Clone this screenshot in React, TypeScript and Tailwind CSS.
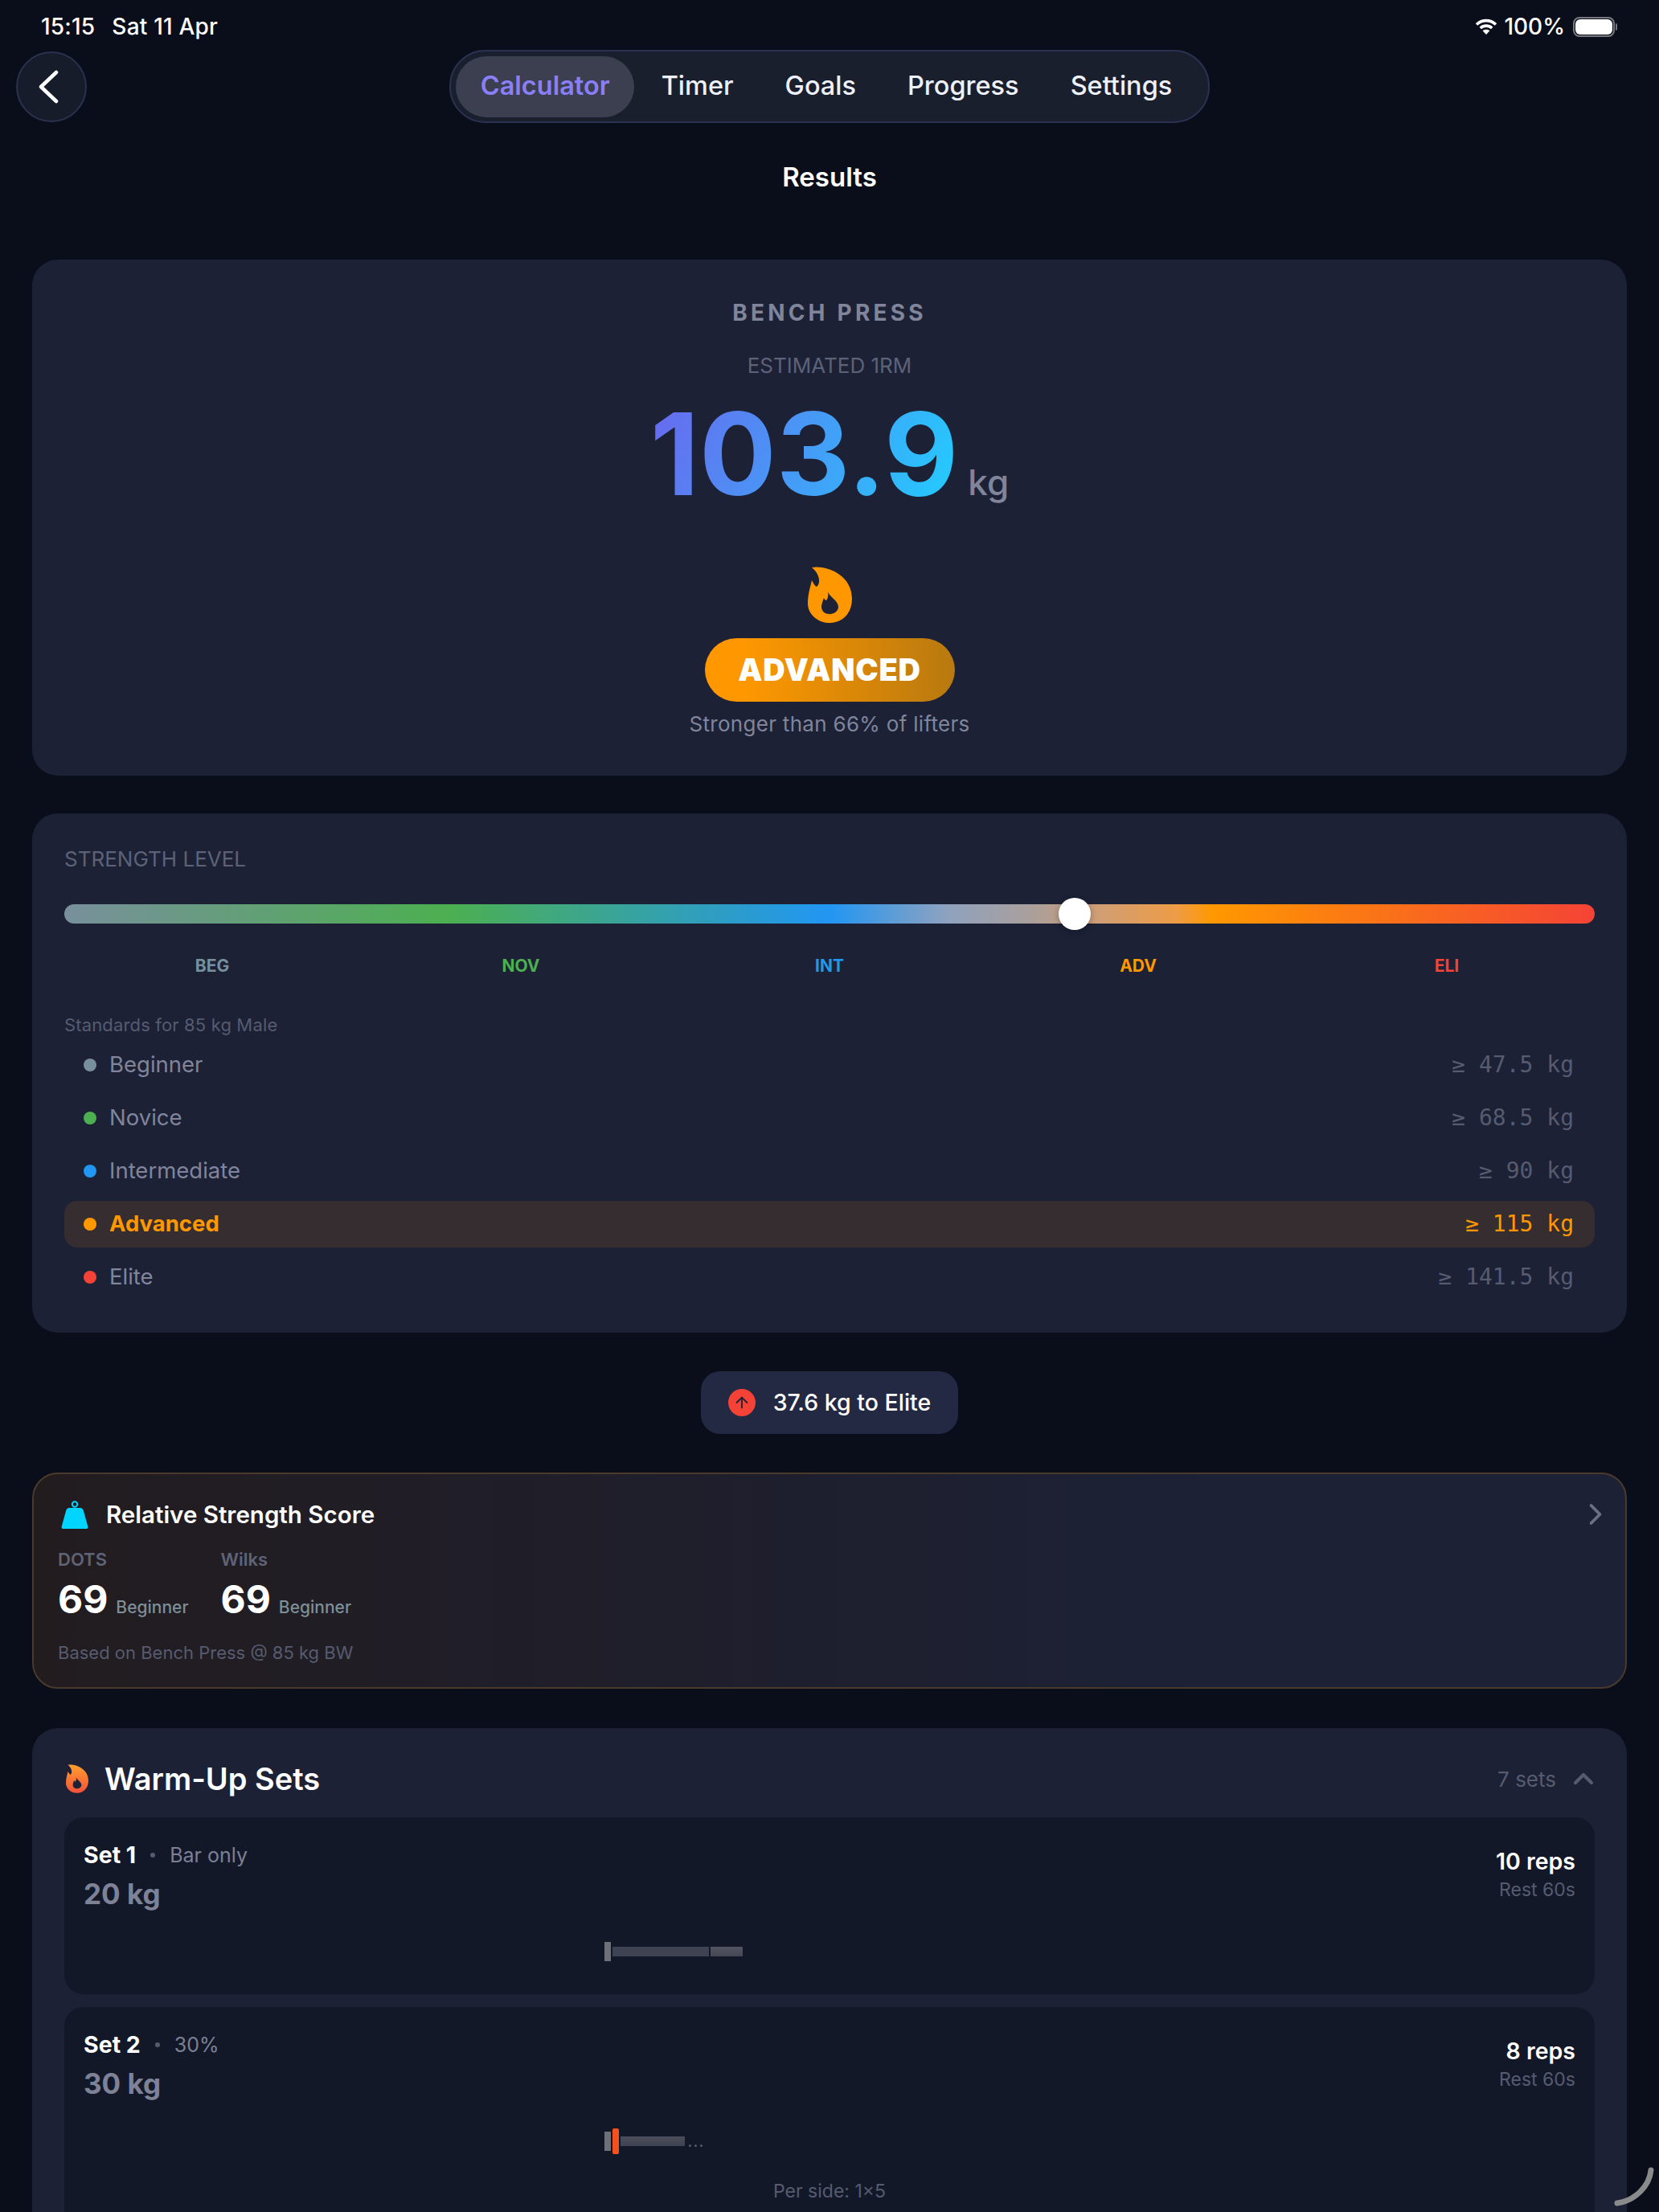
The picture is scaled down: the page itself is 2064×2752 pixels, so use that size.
import { ChevronRight, ChevronUp, ArrowUp } from "lucide-react";

const navItems = ["Calculator", "Timer", "Goals", "Progress", "Settings"];

const scale = [
  { short: "BEG", color: "text-[#78909c]" },
  { short: "NOV", color: "text-[#4caf50]" },
  { short: "INT", color: "text-[#2196f3]" },
  { short: "ADV", color: "text-[#ff9800]" },
  { short: "ELI", color: "text-[#f44336]" },
];

const standards = [
  { name: "Beginner", value: "≥ 47.5 kg", dot: "bg-[#78909c]" },
  { name: "Novice", value: "≥ 68.5 kg", dot: "bg-[#4caf50]" },
  { name: "Intermediate", value: "≥ 90 kg", dot: "bg-[#2196f3]" },
  { name: "Advanced", value: "≥ 115 kg", dot: "bg-[#ff9800]", active: true },
  { name: "Elite", value: "≥ 141.5 kg", dot: "bg-[#f44336]" },
];

const FlameIcon = ({ className, fill }: { className: string; fill: string }) => (
  <svg viewBox="0 0 55 70" className={className}>
    <defs>
      <linearGradient id="warm" x1="0" y1="0" x2="0" y2="1">
        <stop offset="0" stopColor="#ff9f2e" />
        <stop offset="1" stopColor="#f4513a" />
      </linearGradient>
    </defs>
    <path
      fill={fill}
      fillRule="evenodd"
      d="M5 1C20-2 55 8 55 40C55 58 43 70 27 70C11 70 0 58 0 46C0 34 3 26 5 17C7 21 9 24 11 25C17 20 14 8 5 1ZM25 31C27 38 38 42 38 50C38 55 33 59 27 59C21 59 17 55 17 50C17 46 19 42 20 39C21 41 22 42 23 42C25 40 26 35 25 31Z"
    />
  </svg>
);

const StatusBar = () => (
  <div className="flex h-[62px] items-center justify-between pr-[52px] pl-[51px] pt-1 text-[28px] font-medium text-white">
    <div className="flex gap-[21px] tracking-[0.2px]">
      <span>15:15</span>
      <span>Sat 11 Apr</span>
    </div>
    <div className="flex items-center gap-[8px]">
      <svg viewBox="0 0 28 20" className="h-[20px] w-[28px]" fill="none" stroke="white" strokeWidth="3.6">
        <path d="M2 7.5C9 1 19 1 26 7.5" />
        <path d="M6.8 12C11 8.2 17 8.2 21.2 12" />
        <path fill="white" stroke="none" d="M14 20L9.6 15.2C12 13.2 16 13.2 18.4 15.2Z" />
      </svg>
      <span>100%</span>
      <div className="ml-[2px] flex items-center gap-[1px]">
        <div className="h-[25px] w-[52px] rounded-[8px] border-2 border-[#77787d] p-[1px]">
          <div className="h-full w-full rounded-[6px] bg-white" />
        </div>
        <div className="h-[9px] w-[2px] rounded-r-full bg-[#77787d]" />
      </div>
    </div>
  </div>
);

const Header = () => (
  <div className="grid grid-cols-[1fr_auto_1fr] items-center">
    <button className="ml-5 flex h-[88px] w-[88px] items-center justify-center rounded-full border-2 border-[#2b3150] bg-[#171c2b]">
      <svg viewBox="0 0 26 42" className="mr-[8px] h-[42px] w-[26px]" fill="none" stroke="white" strokeWidth="4.5" strokeLinecap="round" strokeLinejoin="round">
        <path d="M23 3L4 21L23 39" />
      </svg>
    </button>
    <nav className="flex h-[91px] items-center gap-[3px] rounded-[45px] border-2 border-[#2b3150] bg-[#1a1f2e] p-[6px] pr-[14px]">
      {navItems.map((item, i) => (
        <div
          key={item}
          className={
            i === 0
              ? "flex h-[76px] items-center rounded-[38px] bg-[#3b3f50] px-[30.5px] text-[32.5px] font-semibold text-[#8b7ff8]"
              : "flex h-[76px] items-center px-[30.5px] text-[32.5px] font-medium text-[#eef0fa]"
          }
        >
          {item}
        </div>
      ))}
    </nav>
    <div />
  </div>
);

const ResultCard = () => (
  <section className="flex h-[642px] flex-col items-center rounded-[32px] bg-[#1c2136] pt-[49px]">
    <div className="text-[28px] leading-[34px] font-bold tracking-[0.15em] text-[#80859b]">BENCH PRESS</div>
    <div className="mt-[33px] text-[26px] leading-[32px] text-[#5d6278]">ESTIMATED 1RM</div>
    <div className="mt-[8px] flex items-baseline gap-[12px]">
      <span className="bg-[linear-gradient(115deg,#6b66ee,#20d0ff)] bg-clip-text text-[142px] leading-[170px] font-bold text-transparent">
        103.9
      </span>
      <span className="text-[44px] font-medium text-[#80859b]">kg</span>
    </div>
    <FlameIcon className="mt-[56px] h-[70px] w-[55px]" fill="#ff9800" />
    <div className="mt-[19px] flex h-[79px] w-[311px] items-center justify-center rounded-[40px] bg-[linear-gradient(90deg,#ff9800,#ff9800_15%,#b8790f)] text-[38px] font-black tracking-[0.02em] text-white">
      ADVANCED
    </div>
    <div className="mt-[10px] text-[26px] leading-[36px] tracking-[0.3px] text-[#80859b]">Stronger than 66% of lifters</div>
  </section>
);

const LevelCard = () => (
  <section className="mt-[47px] h-[646px] rounded-[32px] bg-[#1c2136] px-10 pt-[42px]">
    <div className="text-[26px] leading-[30px] text-[#5d6278]">STRENGTH LEVEL</div>
    <div className="relative mt-[41px] h-[24px] rounded-full bg-[linear-gradient(90deg,#78909c,#4caf50_25%,#2196f3_50%,#8fa2bf_57.7%,#ab9f9b_63.3%,#d09e76_67.4%,#ee9c45_72.7%,#ff9800_75%,#f44336)]">
      <div className="absolute top-[-8px] left-[1237px] h-[40px] w-[40px] rounded-full bg-white shadow-[0_2px_8px_rgba(0,0,0,0.3)]" />
    </div>
    <div className="-mx-2 mt-[39px] grid grid-cols-5">
      {scale.map((s) => (
        <div key={s.short} className={`text-center text-[21px] leading-[28px] font-bold ${s.color}`}>
          {s.short}
        </div>
      ))}
    </div>
    <div className="mt-[44px] text-[22px] leading-[30px] tracking-[0.15px] text-[#565b70]">Standards for 85 kg Male</div>
    <div className="mt-[6px] flex flex-col gap-[8px]">
      {standards.map((row) => (
        <div
          key={row.name}
          className={`flex h-[58px] items-center rounded-[16px] pr-[26px] pl-6 ${row.active ? "bg-[#362d31]" : ""}`}
        >
          <div className={`h-[16px] w-[16px] rounded-full ${row.dot}`} />
          <div className={`ml-4 text-[27.5px] ${row.active ? "font-bold text-[#ff9800]" : "text-[#80859b]"}`}>{row.name}</div>
          <div
            className={`ml-auto [font-family:'DejaVu_Sans_Mono',monospace] text-[28px] ${
              row.active ? "font-medium text-[#ff9800]" : "text-[#565b70]"
            }`}
          >
            {row.value}
          </div>
        </div>
      ))}
    </div>
  </section>
);

const EliteChip = () => (
  <div className="mt-[48px] flex justify-center">
    <div className="flex h-[78px] items-center gap-[22px] rounded-[24px] bg-[#232943] px-[34px] text-[28.5px] font-medium text-white">
      <div className="flex h-[34px] w-[34px] items-center justify-center rounded-full bg-[#f44336]">
        <ArrowUp className="h-[22px] w-[22px] text-[#1c2136]" strokeWidth={2} />
      </div>
      37.6 kg to Elite
    </div>
  </div>
);

const Score = ({ label }: { label: string }) => (
  <div>
    <div className="text-[22px] leading-[28px] font-semibold text-[#5f6378]">{label}</div>
    <div className="mt-[5px] flex items-baseline gap-[10px]">
      <span className="text-[48px] leading-[62px] font-bold text-white">69</span>
      <span className="text-[21px] font-medium text-[#7d8f99]">Beginner</span>
    </div>
  </div>
);

const ScoreCard = () => (
  <section className="relative mt-[48px] h-[269px] rounded-[32px] border-2 border-[#4a3a2c] bg-[linear-gradient(90deg,#221c1f,#1c2136_75%)] pt-[30px] pl-[30px]">
    <div className="flex items-center gap-[22px]">
      <svg viewBox="0 0 34 35" className="ml-[4px] h-[35px] w-[34px]">
        <circle cx="17" cy="4.5" r="3.2" fill="none" stroke="#00d4ff" strokeWidth="2" />
        <path fill="#00d4ff" d="M10 9H24C26 9 27 10 28 13L33 31C34 34 33 35 31 35H3C1 35 0 34 1 31L6 13C7 10 8 9 10 9Z" />
      </svg>
      <div className="text-[29.5px] leading-[40px] font-semibold text-white">Relative Strength Score</div>
    </div>
    <div className="mt-[22px] flex gap-[40px]">
      <Score label="DOTS" />
      <Score label="Wilks" />
    </div>
    <div className="mt-[20px] text-[22px] leading-[30px] text-[#565b70]">Based on Bench Press @ 85 kg BW</div>
    <ChevronRight className="absolute top-[28px] right-[15px] h-[44px] w-[44px] text-[#6b7088]" strokeWidth={2} />
  </section>
);

const SetCard = ({
  title,
  note,
  weight,
  reps,
  plate,
  perSide,
}: {
  title: string;
  note: string;
  weight: string;
  reps: string;
  plate?: boolean;
  perSide?: string;
}) => (
  <div className={`${perSide ? "h-[320px]" : "h-[220px]"} shrink-0 rounded-[24px] bg-[#131829] px-6 pt-[30px]`}>
    <div className="flex items-start justify-between">
      <div>
        <div className="flex items-center text-[25px] leading-[34px] text-[#7b8095]">
          <span className="text-[28.5px] font-bold text-white">{title}</span>
          <span className="mx-[18px] h-[6px] w-[6px] rounded-full bg-[#565b70]" />
          {note}
        </div>
        <div className="mt-[8px] text-[35px] leading-[46px] font-bold text-[#7e8297]">{weight}</div>
      </div>
      <div className="pt-[7px] text-right">
        <div className="text-[28.5px] leading-[36px] font-semibold text-white">{reps}</div>
        <div className="mt-[2px] text-[23px] leading-[30px] text-[#565b70]">Rest 60s</div>
      </div>
    </div>
    <div className="mx-auto mt-[33px] flex h-[32px] w-[560px] items-center">
      <div className="h-[24px] w-[8px] bg-[#6e7079]" />
      {plate ? (
        <>
          <div className="ml-[2px] h-[32px] w-[8px] rounded-[2px] bg-[#f4511e]" />
          <div className="ml-[2px] h-[12px] w-[80px] bg-[linear-gradient(#4b4d5b,#3f4250)]" />
          <div className="ml-[5px] flex gap-[4px] self-end pb-[9px]">
            <div className="h-[3px] w-[3px] rounded-full bg-[#565b70]" />
            <div className="h-[3px] w-[3px] rounded-full bg-[#565b70]" />
            <div className="h-[3px] w-[3px] rounded-full bg-[#565b70]" />
          </div>
        </>
      ) : (
        <>
          <div className="ml-[2px] h-[12px] w-[120px] bg-[#3f4250]" />
          <div className="ml-[2px] h-[12px] w-[40px] bg-[linear-gradient(#525462,#454755)]" />
        </>
      )}
    </div>
    {perSide && <div className="mt-[31px] text-center text-[23px] leading-[30px] text-[#565b70]">{perSide}</div>}
  </div>
);

const WarmUpCard = () => (
  <section className="mt-[49px] h-[700px] rounded-[32px] bg-[#1c2136] px-10 pt-[42px]">
    <div className="flex h-[42px] items-center">
      <FlameIcon className="ml-[2px] h-[36px] w-[28px]" fill="url(#warm)" />
      <div className="ml-[20px] text-[38px] font-semibold text-white">Warm-Up Sets</div>
      <div className="ml-auto text-[26px] text-[#565b70]">7 sets</div>
      <ChevronUp className="mr-[-6px] ml-[14px] h-[40px] w-[40px] text-[#565b70]" strokeWidth={2.5} />
    </div>
    <div className="mt-[27px] flex flex-col gap-4">
      <SetCard title="Set 1" note="Bar only" weight="20 kg" reps="10 reps" />
      <SetCard title="Set 2" note="30%" weight="30 kg" reps="8 reps" plate perSide="Per side: 1×5" />
    </div>
  </section>
);

export default function App() {
  return (
    <div className="relative h-[2752px] w-[2064px] overflow-hidden bg-[#0a0e1a] [font-family:Inter,sans-serif]">
      <StatusBar />
      <Header />
      <h1 className="mt-[47px] text-center text-[33px] leading-[40px] font-semibold text-white">Results</h1>
      <main className="mt-[83px] px-10">
        <ResultCard />
        <LevelCard />
        <EliteChip />
        <ScoreCard />
        <WarmUpCard />
      </main>
      <svg viewBox="0 0 50 50" className="absolute right-[6px] bottom-[6px] h-[50px] w-[50px]" fill="none">
        <path d="M46 4C44 24 26 42 4 45" stroke="#8a8a8a" strokeWidth="7" strokeLinecap="round" />
      </svg>
    </div>
  );
}
